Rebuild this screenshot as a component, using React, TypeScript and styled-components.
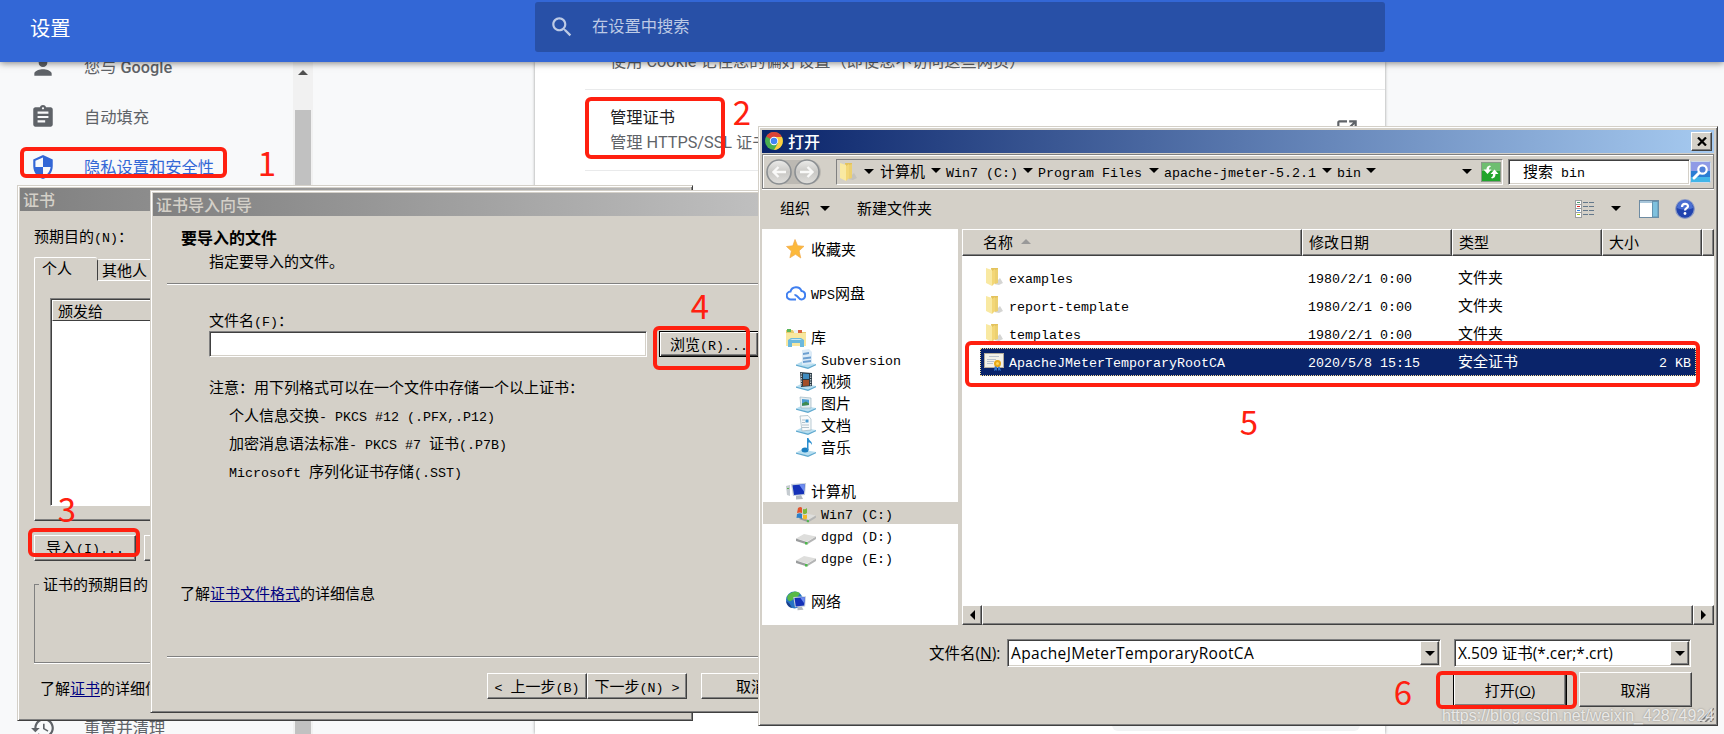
import styled, { createGlobalStyle } from "styled-components";

const FACE = "#d4d0c8";

const GlobalStyle = createGlobalStyle`
  * {
    box-sizing: border-box;
  }
  body {
    margin: 0;
    overflow: hidden;
  }
`;

const Screen = styled.div`
  position: relative;
  width: 1724px;
  height: 734px;
  overflow: hidden;
  display: flex;
  flex-direction: column;
  background: #f8f9fa;
  font-family: Roboto, "Noto Sans CJK SC", sans-serif;
  font-size: 16.25px;
`;

/* ---------- settings page ---------- */

const Header = styled.header`
  height: 62px;
  flex: none;
  display: flex;
  align-items: flex-start;
  background: #3367d6;
  color: white;
  box-shadow: 0 1px 7px rgba(0, 0, 0, 0.5);
  z-index: 1;
`;

const PageTitle = styled.h1`
  width: 535px;
  margin: 0;
  padding-left: 30px;
  font-size: 20.3px;
  font-weight: 400;
  line-height: 58px;
`;

const SearchBar = styled.div`
  width: 850px;
  height: 50px;
  margin-top: 2px;
  padding-left: 14px;
  display: flex;
  align-items: center;
  gap: 17px;
  border-radius: 3px;
  background: #2850a7;
  color: #bdcae5;
  line-height: 50px;
`;

const PageBody = styled.div`
  flex: 1;
  display: flex;
  overflow: hidden;
`;

const Menu = styled.nav`
  width: 293px;
  height: 672px;
  display: flex;
  flex-direction: column;
  margin-top: -20px;
`;

const MenuItem = styled.div<{ $active?: boolean; $last?: boolean }>`
  height: 50px;
  flex: none;
  display: flex;
  align-items: center;
  gap: 28px;
  margin-top: ${(p) => (p.$last ? "511px" : "0")};
  padding-left: 30px;
  color: ${(p) => (p.$active ? "#3367d6" : "#5f6368")};
  line-height: 24px;
  svg {
    flex: none;
  }
  span {
    padding-top: 1px;
  }
  b {
    font-weight: 500;
  }
`;

const PageScroll = styled.div`
  width: 20px;
  display: flex;
  flex-direction: column;
  align-items: center;
  gap: 35px;
  padding-top: 8px;
  background: #f1f1f1;
`;

const ScrollThumb = styled.div`
  width: 16px;
  flex: 1;
  background: #c1c1c1;
`;

const Card = styled.main`
  width: 850px;
  margin-left: 222px;
  padding-left: 50px;
  background: white;
  box-shadow: 0 0 3px rgba(0, 0, 0, 0.4);
`;

const Setting = styled.section<{ $height: number }>`
  height: ${(p) => p.$height}px;
  display: flex;
  justify-content: space-between;
  align-items: center;
  padding: 0 25px;
  border-bottom: 1px solid #e9eaeb;
  line-height: 25px;
  color: #5f6368;
  strong {
    display: block;
    font-weight: 400;
    color: #202124;
  }
`;

const Cut = styled.div`
  margin-top: -28px;
`;

const Chip = styled.div`
  position: absolute;
  left: 1112px;
  top: 700px;
  width: 248px;
  height: 31px;
  border-radius: 6px;
  background: #f1f3f4;
`;

/* ---------- classic windows ---------- */

const Window = styled.div<{
  $x: number;
  $y: number;
  $w: number;
  $h: number;
  $sizable?: boolean;
}>`
  position: absolute;
  z-index: 2;
  left: ${(p) => p.$x}px;
  top: ${(p) => p.$y}px;
  width: ${(p) => p.$w}px;
  height: ${(p) => p.$h}px;
  padding: ${(p) => (p.$sizable ? 2 : 1)}px;
  display: flex;
  flex-direction: column;
  overflow: hidden;
  background: ${FACE};
  border: 1px solid;
  border-color: ${FACE} #404040 #404040 ${FACE};
  box-shadow: inset 1px 1px white, inset -1px -1px #808080;
  color: black;
  font-family: "Noto Sans CJK SC", sans-serif;
  font-size: 15px;
  line-height: 20px;
  white-space: pre;
`;

const Caption = styled.div<{ $active?: boolean }>`
  height: 23px;
  flex: none;
  margin: 1px 1px 0;
  padding: 0 2px 2px 3px;
  display: flex;
  align-items: center;
  gap: 5px;
  background: ${(p) =>
    p.$active
      ? "linear-gradient(90deg, #0a246a, #a6caf0)"
      : "linear-gradient(90deg, #808080, #c0c0c0)"};
  color: ${(p) => (p.$active ? "white" : FACE)};
  font-size: 16px;
  font-weight: 500;
`;

const Latin = styled.span`
  font-family: "Liberation Mono", monospace;
  font-size: 13.34px;
  line-height: 1;
`;

// Chinese glyphs are 15px wide and Latin ones 8px
function Sim({ children }: { children: string }) {
  return (
    <span>
      {children
        .split(/([\x20-\x7e]+)/)
        .map((part, i) => (i % 2 ? <Latin key={i}>{part}</Latin> : part))}
    </span>
  );
}

const Bevel = styled.div<{ $w: number; $default?: boolean }>`
  width: ${(p) => p.$w}px;
  height: 26px;
  flex: none;
  display: flex;
  align-items: center;
  justify-content: center;
  background: ${FACE};
  border: 1px solid;
  border-color: ${(p) => (p.$default ? "black" : "white #404040 #404040 white")};
  box-shadow: ${(p) =>
    p.$default
      ? "inset 1px 1px white, inset -1px -1px #404040, inset -2px -2px #808080"
      : "inset -1px -1px #808080"};
`;

const Sunken = styled.div<{ $w: number; $h: number }>`
  width: ${(p) => p.$w}px;
  height: ${(p) => p.$h}px;
  flex: none;
  display: flex;
  align-items: center;
  background: white;
  border: 1px solid;
  border-color: #808080 white white #808080;
  box-shadow: inset 1px 1px #404040, inset -1px -1px ${FACE};
`;

const Link = styled.a`
  color: #000080;
  text-decoration: underline;
  text-underline-offset: 2px;
`;

const CertBody = styled.div`
  flex: 1;
  display: flex;
  flex-direction: column;
  padding: 15px 0 0 15px;
`;

const Tabs = styled.div`
  height: 24px;
  display: flex;
  align-items: flex-end;
  margin-top: 11px;
`;

const Tab = styled.div<{ $active?: boolean }>`
  width: ${(p) => (p.$active ? 63 : 70)}px;
  height: ${(p) => (p.$active ? 24 : 22)}px;
  padding-left: ${(p) => (p.$active ? 7 : 4)}px;
  border-top: 1px solid white;
  border-left: 1px solid ${(p) => (p.$active ? "white" : "#404040")};
  border-bottom: ${(p) => (p.$active ? "0" : "1px solid white")};
  border-radius: 2px 2px 0 0;
`;

const TabPane = styled.div`
  height: 240px;
  flex: none;
  padding: 17px 0 0 15px;
  border-left: 1px solid white;
  border-bottom: 1px solid #404040;
  box-shadow: inset 0 -1px #808080;
`;

const ListBox = styled.div`
  height: 208px;
  padding: 1px 0 0 1px;
  background: white;
  border: 1px solid;
  border-color: #808080 white white #808080;
  box-shadow: inset 1px 1px #404040;
`;

const ListHead = styled.div`
  height: 21px;
  padding-left: 5px;
  background: ${FACE};
  border-top: 1px solid white;
  border-left: 1px solid white;
  border-bottom: 1px solid #404040;
  line-height: 19px;
`;

const ButtonRow = styled.div`
  display: flex;
  gap: 8px;
  margin-top: 14px;
  ${Bevel} {
    padding-bottom: 2px;
  }
`;

const Group = styled.fieldset`
  height: 89px;
  margin: 13px 0 0;
  padding: 0 0 0 4px;
  border: 1px solid #808080;
  box-shadow: 0 1px white;
  legend {
    padding: 0 4px;
  }
`;

const CertHint = styled.div`
  margin: 15px 0 0 6px;
`;

const WizardHead = styled.div`
  height: 68px;
  flex: none;
  margin-left: 15px;
  padding: 10px 0 0 14px;
  border-bottom: 1px solid #808080;
  box-shadow: 0 1px white;
  line-height: 23px;
  strong {
    display: block;
    font-size: 16px;
    font-weight: 700;
  }
  p {
    margin: 0 0 0 28px;
  }
`;

const WizardBody = styled.div`
  height: 373px;
  flex: none;
  margin-left: 15px;
  padding: 26px 0 0 42px;
  border-bottom: 1px solid #808080;
  box-shadow: 0 1px white;
`;

const FileRow = styled.div`
  display: flex;
  gap: 12px;
  margin-top: 1px;
`;

const Notes = styled.ul`
  margin: 16px 0 0;
  padding: 0;
  list-style: none;
  line-height: 28px;
  li + li {
    padding-left: 20px;
  }
`;

const WizardHint = styled.div`
  margin: 98px 0 0 -29px;
`;

const WizardFoot = styled.div`
  display: flex;
  margin: 16px 0 0 335px;
  ${Bevel}:last-child {
    margin-left: 14px;
  }
`;

/* ---------- open dialog ---------- */

const CloseBox = styled(Bevel)`
  height: 19px;
  margin: 1px 0 0 auto;
`;

const AddressBand = styled.div`
  height: 35px;
  flex: none;
  display: flex;
  align-items: center;
  margin: 1px 1px 0;
  padding-left: 3px;
  border: 1px solid #808080;
  box-shadow: inset 1px 1px white, 0 1px white;
`;

const Breadcrumb = styled.div`
  width: 667px;
  height: 26px;
  display: flex;
  align-items: center;
  margin: 0 5px 0 14px;
  padding: 0 1px;
  border: 1px solid;
  border-color: #808080 white white #808080;
`;

const Crumb = styled.span<{ $w: number }>`
  width: ${(p) => p.$w}px;
  flex: none;
  display: flex;
  align-items: center;
  padding-bottom: 2px;
`;

const SearchField = styled(Sunken)`
  padding: 0 0 1px 14px;
`;

const Arrow = styled.i<{ $up?: boolean; $m?: string; $color?: string }>`
  width: 0;
  height: 0;
  flex: none;
  margin: ${(p) => p.$m ?? "0"};
  border: 5px solid transparent;
  ${(p) =>
    p.$up
      ? `border-bottom-color: ${p.$color ?? "#999"}; border-top: 0;`
      : "border-top-color: black; border-bottom: 0;"}
`;

const Toolbar = styled.div`
  height: 40px;
  flex: none;
  display: flex;
  align-items: center;
  padding: 0 0 2px 19px;
`;

const ToolIcons = styled.div`
  display: flex;
  align-items: center;
  margin: 1px 0 0 auto;
  padding-right: 20px;
`;

const Preview = styled.span`
  display: flex;
  margin-right: 16px;
`;

const Panes = styled.div`
  height: 396px;
  flex: none;
  display: flex;
  gap: 4px;
  margin: 0 1px;
`;

const Places = styled.div`
  width: 196px;
  padding-top: 9px;
  background: white;
`;

const Place = styled.div<{
  $level: number;
  $gap?: number;
  $selected?: boolean;
}>`
  height: 22px;
  display: flex;
  align-items: center;
  gap: 5px;
  margin: ${(p) => p.$gap ?? 0}px 0 0 1px;
  padding: 0 0 1px ${(p) => (p.$level ? 33 : 23)}px;
  background: ${(p) => (p.$selected ? FACE : "transparent")};
`;

const Files = styled.div`
  flex: 1;
  display: flex;
  flex-direction: column;
  background: white;
`;

const Columns = styled.div`
  height: 27px;
  display: flex;
  margin-bottom: 8px;
`;

const Column = styled.div<{ $w: number }>`
  width: ${(p) => p.$w}px;
  display: flex;
  align-items: center;
  gap: 8px;
  padding: 0 0 2px ${(p) => (p.$w > 300 ? 20 : 6)}px;
  background: ${FACE};
  border: 1px solid;
  border-color: white #404040 #404040 white;
  box-shadow: inset -1px -1px #808080;
`;

const FileLine = styled.div<{ $selected?: boolean }>`
  width: 716px;
  height: 28px;
  display: grid;
  grid-template-columns: 25px 299px 150px 150px 1fr;
  align-items: center;
  margin-left: 18px;
  padding: 0 5px 2px 4px;
  background: ${(p) => (p.$selected ? "#0a246a" : "white")};
  color: ${(p) => (p.$selected ? "white" : "black")};
  outline: ${(p) => (p.$selected ? "1px dotted #f5db95" : "0")};
  outline-offset: -1px;
  span:last-child {
    text-align: right;
  }
`;

const HScroll = styled.div`
  height: 20px;
  display: flex;
  margin-top: auto;
  ${Bevel} {
    height: 20px;
  }
`;

const SideArrow = styled.i<{ $right?: boolean }>`
  border: 5px solid transparent;
  ${(p) =>
    p.$right
      ? "border-left-color: black; border-right: 0;"
      : "border-right-color: black; border-left: 0;"}
`;

const NameRow = styled.div`
  display: flex;
  align-items: center;
  margin-top: 14px;
  padding-left: 168px;
  font-family: "Open Sans", "Noto Sans CJK SC", sans-serif;
  font-size: 15.5px;
`;

const Label = styled.label`
  width: 78px;
`;

const Combo = styled(Sunken)<{ $track?: number }>`
  justify-content: space-between;
  margin-right: 13px;
  padding: 0 1px 0 3px;
  letter-spacing: ${(p) => p.$track ?? 0}px;
  ${Bevel} {
    height: 24px;
  }
`;

const ActionRow = styled.div`
  display: flex;
  gap: 12px;
  margin: 5px 0 0 692px;
  font-family: "Open Sans", "Noto Sans CJK SC", sans-serif;
  font-size: 15px;
  ${Bevel} {
    height: 35px;
  }
`;

const Grip = styled.svg`
  position: absolute;
  right: 3px;
  bottom: 3px;
`;

/* ---------- annotations ---------- */

const Mark = styled.div<{ $x: number; $y: number; $w: number; $h: number }>`
  position: absolute;
  z-index: 3;
  left: ${(p) => p.$x}px;
  top: ${(p) => p.$y}px;
  width: ${(p) => p.$w}px;
  height: ${(p) => p.$h}px;
  border: 4px solid #ff2010;
  border-radius: 6px;
`;

const Digit = styled.div<{ $x: number; $y: number }>`
  position: absolute;
  z-index: 3;
  left: ${(p) => p.$x - 15}px;
  top: ${(p) => p.$y - 21}px;
  width: 30px;
  color: #ff2010;
  font: 400 33px/40px "Noto Sans CJK SC", sans-serif;
  text-align: center;
`;

const Watermark = styled.div`
  position: absolute;
  z-index: 3;
  left: 1442px;
  top: 706px;
  color: rgba(255, 255, 255, 0.75);
  text-shadow: 0 0 2px rgba(90, 90, 90, 0.6);
  font: 16px/20px "Liberation Sans", sans-serif;
`;

/* ---------- icons ---------- */

const PAGE_ICONS = {
  person:
    "M12 12c2.21 0 4-1.79 4-4s-1.79-4-4-4-4 1.79-4 4 1.79 4 4 4zm0 2c-2.67 0-8 1.34-8 4v2h16v-2c0-2.66-5.33-4-8-4z",
  autofill:
    "M19 3h-4.18C14.4 1.84 13.3 1 12 1s-2.4.84-2.82 2H5c-1.1 0-2 .9-2 2v14c0 1.1.9 2 2 2h14c1.1 0 2-.9 2-2V5c0-1.1-.9-2-2-2zm-7 0c.55 0 1 .45 1 1s-.45 1-1 1-1-.45-1-1 .45-1 1-1zm2 14H7v-2h7v2zm3-4H7v-2h10v2zm0-4H7V7h10v2z",
  shield:
    "M12 1L3 5v6c0 5.55 3.84 10.74 9 12 5.16-1.26 9-6.45 9-12V5l-9-4zm0 10.99h7c-.53 4.12-3.28 7.79-7 8.94V12H5V6.3l7-3.11v8.8z",
  restore:
    "M13 3c-4.97 0-9 4.03-9 9H1l3.89 3.89.07.14L9 12H6c0-3.87 3.13-7 7-7s7 3.13 7 7-3.13 7-7 7c-1.93 0-3.68-.79-4.94-2.06l-1.42 1.42C8.27 19.99 10.51 21 13 21c4.97 0 9-4.03 9-9s-4.03-9-9-9zm-1 5v5l4.28 2.54.72-1.21-3.5-2.08V8H12z",
  search:
    "M15.5 14h-.79l-.28-.27C15.41 12.59 16 11.11 16 9.5 16 5.91 13.09 3 9.5 3S3 5.91 3 9.5 5.91 16 9.5 16c1.61 0 3.09-.59 4.23-1.57l.27.28v.79l5 4.99L20.49 19l-4.99-5zm-6 0C7.01 14 5 11.99 5 9.5S7.01 5 9.5 5 14 7.01 14 9.5 11.99 14 9.5 14z",
  external:
    "M19 19H5V5h7V3H5c-1.11 0-2 .9-2 2v14c0 1.1.89 2 2 2h14c1.1 0 2-.9 2-2v-7h-2v7zM14 3v2h3.59l-9.83 9.83 1.41 1.41L19 6.41V10h2V3h-7z",
};

function PageIcon({
  name,
  size = 26,
}: {
  name: keyof typeof PAGE_ICONS;
  size?: number;
}) {
  return (
    <svg width={size} height={size} viewBox="0 0 24 24" fill="currentColor">
      <path d={PAGE_ICONS[name]} />
    </svg>
  );
}

function ChromeIcon() {
  return (
    <svg width="18" height="18" viewBox="0 0 18 18">
      <circle cx="9" cy="9" r="9" fill="#4caf50" />
      <path d="M9 9L1.2 4.5A9 9 0 0 1 16.8 4.5z" fill="#db4437" />
      <path d="M9 5h7.9A9 9 0 0 1 9 18l4-7z" fill="#ffcd40" />
      <circle cx="9" cy="9" r="4.2" fill="white" />
      <circle cx="9" cy="9" r="3.3" fill="#4285f4" />
    </svg>
  );
}

function NavButtons() {
  return (
    <svg width="56" height="28" viewBox="0 0 56 28">
      <defs>
        <linearGradient id="nav" x1="0" y1="0" x2="0" y2="1">
          <stop offset="0" stopColor="#ececea" />
          <stop offset="0.5" stopColor="#c9c8c5" />
          <stop offset="1" stopColor="#e0dfdc" />
        </linearGradient>
      </defs>
      <rect x="1" y="2" width="54" height="24" rx="12" fill="#bcb9b3" />
      {[13, 41].map((cx) => (
        <circle
          key={cx}
          cx={cx}
          cy="14"
          r="12"
          fill="url(#nav)"
          stroke="#8b8f92"
          strokeWidth="1.6"
        />
      ))}
      <g fill="none" stroke="#f9f9f8" strokeWidth="2.4">
        <path d="M20 14H8M12.500 9L7.500 14l5 5" />
        <path d="M34 14h12M41.500 9l5 5-5 5" />
      </g>
    </svg>
  );
}

function FolderIcon() {
  return (
    <svg width="20" height="20" viewBox="0 0 20 20">
      <path d="M10 17l6-6 3 5-4 2z" fill="#b9b9b5" opacity="0.6" />
      <path d="M7 1h7v13l-5 3z" fill="#e3c25c" />
      <path d="M2 1l6 2v16l-6-3z" fill="#f9e9a2" />
      <path d="M8 4l3-2v14l-3 3z" fill="#f3d777" />
      <path d="M11 3l3-1v14l-3 1z" fill="#ecd070" />
    </svg>
  );
}

function CertIcon() {
  return (
    <svg width="20" height="20" viewBox="0 0 20 20">
      <rect x="0.500" y="2.500" width="19" height="14" fill="#f3f1e9" stroke="#b5ad9d" />
      <path d="M5 5.500h10M3 8.500h9M3 10.500h7M3 12.500h6" stroke="#b9c2cb" />
      <path d="M11 14l-1 6 2-1 1 1v-5zM15 14l2 6-2-1-1 1v-5z" fill="#3176d1" />
      <circle cx="13.500" cy="12.500" r="3.500" fill="#e9a916" />
      <circle cx="13.500" cy="12.500" r="1.500" fill="#fbd65c" />
    </svg>
  );
}

function RefreshIcon() {
  return (
    <svg width="20" height="20" viewBox="0 0 20 20">
      <rect x="0.500" y="0.500" width="19" height="19" fill="#22a52c" stroke="#8a9a88" />
      <path d="M1 1h18v8H1z" fill="#6fbe70" />
      <path
        d="M9 3.500C6 4 5.500 6 5.500 7.500H2.500L6.500 12l4-4.500H8c0-2 .5-2.500 2-3z"
        fill="white"
      />
      <path
        d="M11 16.500c3-.5 3.500-2.500 3.500-4.500h3l-4-4.500-4 4.500H12c0 2-.5 3-2 3.500z"
        fill="white"
      />
    </svg>
  );
}

function FindIcon() {
  return (
    <svg width="21" height="22" viewBox="0 0 21 22">
      <rect x="0.500" y="0.500" width="20" height="21" rx="1" fill="#2a78d0" stroke="#cfd9e6" />
      <path d="M1 1h19v9H1z" fill="#8f9be6" />
      <path d="M1 10h19v11H1z" fill="#2b7dd4" />
      <path d="M1 16h19v5H1z" fill="#42b5e8" />
      <path d="M9.500 11.500L4 17" stroke="white" strokeWidth="3" strokeLinecap="round" />
      <circle cx="12.500" cy="8.500" r="4.200" fill="#5080d8" stroke="white" strokeWidth="2.200" />
    </svg>
  );
}

function ViewIcon() {
  return (
    <svg width="20" height="18" viewBox="0 0 20 18">
      <rect x="0.500" y="0.500" width="6" height="17" fill="white" stroke="#9a9d9f" />
      <path d="M1 4.500h5M1 8.500h5M1 12.500h5" stroke="#9a9d9f" />
      <path d="M2 2.500h3" stroke="#4c9a6a" />
      <path d="M2 6.500h3" stroke="#e02020" />
      <path d="M2 10.500h3" stroke="#2f84e0" />
      <path d="M2 14.500h3" stroke="#a5c81c" />
      <path
        d="M8 2.500h5M14 2.500h5M8 6.500h5M14 6.500h5M8 10.500h5M14 10.500h5M8 14.500h5M14 14.500h5"
        stroke="#64788b"
      />
    </svg>
  );
}

function PreviewIcon() {
  return (
    <svg width="20" height="18" viewBox="0 0 20 18">
      <rect x="0.500" y="0.500" width="19" height="17" fill="white" stroke="#6d8ba3" />
      <path d="M1 1h18v2H1z" fill="#a8c6da" />
      <rect x="13.500" y="1.500" width="5.500" height="15.500" fill="#7fc1de" stroke="#6594b0" />
    </svg>
  );
}

function HelpIcon() {
  return (
    <svg width="20" height="20" viewBox="0 0 20 20">
      <circle cx="10" cy="10" r="9.300" fill="#2143ae" stroke="#8d9cc6" strokeWidth="1.200" />
      <path d="M2 9a8 8 0 0 1 16 0c-5 2-11 2-16 0z" fill="#4a6fd2" />
      <path d="M7 8c0-4 6-4 6-.8 0 2-3 2-3 4.300" fill="none" stroke="white" strokeWidth="2.200" />
      <circle cx="10" cy="14.500" r="1.400" fill="white" />
    </svg>
  );
}

type PlaceKind =
  | "star"
  | "cloud"
  | "library"
  | "svn"
  | "video"
  | "picture"
  | "document"
  | "music"
  | "computer"
  | "system"
  | "drive"
  | "network";

const tray = (
  <>
    <path d="M0 15.500l6-3 14 2.500-8 4z" fill="#b7def0" />
    <path d="M0 15.500l12 3L20 15v1.200L12 20 0 16.700z" fill="#5fa9cf" />
  </>
);

const disk = (
  <>
    <path d="M0 12.500l8-4.500 12 2.500-9 5z" fill="#dededc" />
    <path d="M0 12.500l11 3.500v2.500L0 15z" fill="#9b9d9e" />
    <path d="M11 16l9-5.500V13l-9 5.500z" fill="#b4b5b5" />
    <path d="M9 16h2.500v2.500H9z" fill="#4bb84a" />
  </>
);

const monitor = (
  <>
    <path d="M10 15l5-1 2 4-7 .500z" fill="#b4bac0" />
    <path d="M5 3l15-1-1 12-12 1z" fill="#c3cddb" />
    <path d="M6.500 4.200L18.700 3.200l-.8 9.800-9.900 1z" fill="#1531b8" />
    <path d="M13 3.600l5.700-.4-.6 7.500z" fill="#6d8cf0" />
  </>
);

const drawings: Record<PlaceKind, React.ReactNode> = {
  star: (
    <path
      d="M9 .500l2.600 6.200 6.400.600-4.900 4.500 1.700 7.200-5.300-3.700-5.600 3.500 1.500-6.800L.500 7.500l6.300-.700z"
      fill="#fcb93b"
      stroke="#f0a94a"
      strokeWidth="0.700"
    />
  ),
  cloud: (
    <path
      d="M10 16.500H5a4 4 0 0 1-.5-8A5.800 5.800 0 0 1 15.500 8a4.300 4.300 0 0 1 0 8.500c-3.500 0-3.500-5-7-4.500"
      fill="none"
      stroke="#3f7ff0"
      strokeWidth="2"
    />
  ),
  library: (
    <>
      <path d="M0 3h7l1 2h12v13H0z" fill="#e6cb6c" />
      <path d="M1 2h4v3H1z" fill="#5cb85c" />
      <path d="M8 3h4v3H8z" fill="#e8f0f4" />
      <path d="M12 3h4v3h-4z" fill="#d9603f" />
      <path d="M0 6h20v13H0z" fill="#f8e79f" />
      <path d="M2 13l3-2h10l3 2v7h-4v-4H6v4H2z" fill="#6cb9dd" />
      <path d="M4 13l2-1h8l2 1z" fill="#c9e9f6" />
    </>
  ),
  svn: (
    <>
      {tray}
      <path d="M6 1l7-1 3 3v12l-10 1z" fill="#dcebf7" />
      <path d="M7 4l6-1v2l-6 1zM7 8.500l8-1v2l-8 1zM7 12l8-1v2l-8 1z" fill="#6d9fd0" />
    </>
  ),
  video: (
    <>
      {tray}
      <path d="M4 1l12 1v13L5 16z" fill="#2b3b45" />
      <path d="M7 2.500l6 .5v5H7z" fill="#3f8cc0" />
      <path d="M7 9h6v5.500L7 15z" fill="#a34e28" />
      <path d="M5.300 2v13M14.700 3v12" stroke="#d7e0e4" strokeDasharray="1.500 1" />
    </>
  ),
  picture: (
    <>
      {tray}
      <path d="M4 4l11 1v10L5 15z" fill="#e5eef2" stroke="#9db6c2" strokeWidth="0.700" />
      <path d="M6 6l7 .700V12l-7 .700z" fill="#4b9cd3" />
      <path d="M6 10.500l4-2 3 2V12l-7 .700z" fill="#3e8a52" />
    </>
  ),
  document: (
    <>
      {tray}
      <path d="M4 1l8-.500L15 4v11l-9 1z" fill="#f8fafb" stroke="#9db6c2" strokeWidth="0.700" />
      <path d="M6 5h3M6 7.500h3M6 10h7M6 12.500h7" stroke="#b3c2cc" />
      <path d="M9.500 4.500h3v3h-3z" fill="#4b9cd3" />
    </>
  ),
  music: (
    <>
      {tray}
      <ellipse cx="9" cy="13" rx="3.500" ry="2.500" fill="#1c7fc0" />
      <path d="M11 1h1.500c.500 3 4 3 3.500 7-1-2-2-2.500-3.500-2.500V13H11z" fill="#2b8fd0" />
    </>
  ),
  computer: (
    <>
      <path d="M0 5l4-1v11l-3-1z" fill="#c5cbd0" />
      <path d="M1 7.500h2" stroke="#5fb34f" />
      {monitor}
    </>
  ),
  system: (
    <>
      <g transform="translate(3.500 4) scale(.82)">{disk}</g>
      <path d="M2 5q3-2 4 0v5q-2-1-5 0z" fill="#e2532d" />
      <path d="M7 6q2 1 4-1v5q-2 2-4 .500z" fill="#7ab83c" />
      <path d="M1 11q3-1.500 5 0v5q-3-2-5.500-1z" fill="#2c7fc8" />
      <path d="M7 11.500q2 1 4 0v4q-2 1.500-4 .500z" fill="#f3b92a" />
    </>
  ),
  drive: <g transform="translate(0 1)">{disk}</g>,
  network: (
    <>
      <circle cx="8.500" cy="9" r="8.500" fill="#2673c4" />
      <path d="M2 4q6-6 12-2-2 5-6 5-2 4-5 3-3-2-1-6z" fill="#58b947" />
      <path d="M0 10q4 2 6 7-5-1-6-7z" fill="#1b3f8c" />
      <g transform="translate(3 3.500) scale(.85)">{monitor}</g>
    </>
  ),
};

function PlaceIcon({ kind }: { kind: PlaceKind }) {
  return (
    <svg width="20" height="20" viewBox="0 0 20 20">
      {drawings[kind]}
    </svg>
  );
}

/* ---------- data ---------- */

const crumbs = [
  { text: "计算机", width: 66 },
  { text: "Win7 (C:)", width: 92 },
  { text: "Program Files", width: 126 },
  { text: "apache-jmeter-5.2.1", width: 173 },
  { text: "bin", width: 44 },
];

const places: {
  kind: PlaceKind;
  text: string;
  level?: number;
  gap?: number;
}[] = [
  { kind: "star", text: "收藏夹" },
  { kind: "cloud", text: "WPS网盘", gap: 22 },
  { kind: "library", text: "库", gap: 22 },
  { kind: "svn", text: "Subversion", level: 1 },
  { kind: "video", text: "视频", level: 1 },
  { kind: "picture", text: "图片", level: 1 },
  { kind: "document", text: "文档", level: 1 },
  { kind: "music", text: "音乐", level: 1 },
  { kind: "computer", text: "计算机", gap: 22 },
  { kind: "system", text: "Win7 (C:)", level: 1 },
  { kind: "drive", text: "dgpd (D:)", level: 1 },
  { kind: "drive", text: "dgpe (E:)", level: 1 },
  { kind: "network", text: "网络", gap: 22 },
];

const files = [
  { name: "examples", date: "1980/2/1 0:00", type: "文件夹", size: "" },
  { name: "report-template", date: "1980/2/1 0:00", type: "文件夹", size: "" },
  { name: "templates", date: "1980/2/1 0:00", type: "文件夹", size: "" },
  {
    name: "ApacheJMeterTemporaryRootCA",
    date: "2020/5/8 15:15",
    type: "安全证书",
    size: "2 KB",
  },
];

const marks = [
  { x: 20, y: 147, w: 207, h: 31, dx: 267, dy: 163 },
  { x: 585, y: 97, w: 140, h: 62, dx: 742, dy: 112 },
  { x: 28, y: 528, w: 112, h: 29, dx: 67, dy: 509 },
  { x: 653, y: 326, w: 97, h: 44, dx: 700, dy: 306 },
  { x: 965, y: 341, w: 735, h: 46, dx: 1249, dy: 422 },
  { x: 1436, y: 671, w: 141, h: 38, dx: 1403, dy: 692 },
];

/* ---------- windows ---------- */

function SettingsPage() {
  return (
    <>
      <Header>
        <PageTitle>设置</PageTitle>
        <SearchBar>
          <PageIcon name="search" />
          在设置中搜索
        </SearchBar>
      </Header>
      <PageBody>
        <Menu>
          <MenuItem>
            <PageIcon name="person" />
            <span>
              您与 <b>Google</b>
            </span>
          </MenuItem>
          <MenuItem>
            <PageIcon name="autofill" />
            <span>自动填充</span>
          </MenuItem>
          <MenuItem $active>
            <PageIcon name="shield" />
            <span>隐私设置和安全性</span>
          </MenuItem>
          <MenuItem $last>
            <PageIcon name="restore" />
            <span>重置并清理</span>
          </MenuItem>
        </Menu>
        <PageScroll>
          <Arrow $up $color="#505050" />
          <ScrollThumb />
        </PageScroll>
        <Card>
          <Setting $height={28}>
            <Cut>使用 Cookie 记住您的偏好设置（即使您不访问这些网页）</Cut>
          </Setting>
          <Setting $height={81}>
            <div>
              <strong>管理证书</strong>
              管理 HTTPS/SSL 证书和设置
            </div>
            <PageIcon name="external" />
          </Setting>
        </Card>
      </PageBody>
      <Chip />
    </>
  );
}

function CertificateWindow() {
  return (
    <Window $x={17} $y={185} $w={676} $h={536}>
      <Caption>证书</Caption>
      <CertBody>
        <Sim>预期目的(N)：</Sim>
        <Tabs>
          <Tab $active>个人</Tab>
          <Tab>其他人</Tab>
        </Tabs>
        <TabPane>
          <ListBox>
            <ListHead>颁发给</ListHead>
          </ListBox>
        </TabPane>
        <ButtonRow>
          <Bevel $w={102}>
            <Sim>导入(I)...</Sim>
          </Bevel>
          <Bevel $w={102} />
        </ButtonRow>
        <Group>
          <legend>证书的预期目的</legend>
        </Group>
        <CertHint>
          了解<Link>证书</Link>的详细信息
        </CertHint>
      </CertBody>
    </Window>
  );
}

function ImportWizard() {
  return (
    <Window $x={150} $y={190} $w={620} $h={523}>
      <Caption>证书导入向导</Caption>
      <WizardHead>
        <strong>要导入的文件</strong>
        <p>指定要导入的文件。</p>
      </WizardHead>
      <WizardBody>
        <Sim>文件名(F)：</Sim>
        <FileRow>
          <Sunken $w={438} $h={26} />
          <Bevel $w={100} $default>
            <Sim>浏览(R)...</Sim>
          </Bevel>
        </FileRow>
        <Notes>
          <li>注意：用下列格式可以在一个文件中存储一个以上证书：</li>
          <li>
            <Sim>个人信息交换- PKCS #12 (.PFX,.P12)</Sim>
          </li>
          <li>
            <Sim>加密消息语法标准- PKCS #7 证书(.P7B)</Sim>
          </li>
          <li>
            <Sim>Microsoft 序列化证书存储(.SST)</Sim>
          </li>
        </Notes>
        <WizardHint>
          了解<Link>证书文件格式</Link>的详细信息
        </WizardHint>
      </WizardBody>
      <WizardFoot>
        <Bevel $w={100}>
          <Sim>{"< 上一步(B)"}</Sim>
        </Bevel>
        <Bevel $w={100}>
          <Sim>{"下一步(N) >"}</Sim>
        </Bevel>
        <Bevel $w={100}>取消</Bevel>
      </WizardFoot>
    </Window>
  );
}

function OpenDialog() {
  return (
    <Window $x={758} $y={126} $w={960} $h={600} $sizable>
      <Caption $active>
        <ChromeIcon />
        打开
        <CloseBox $w={21}>
          <svg width="10" height="9" viewBox="0 0 10 9">
            <path d="M1 .500l8 8M9 .500l-8 8" stroke="black" strokeWidth="2.200" />
          </svg>
        </CloseBox>
      </Caption>
      <AddressBand>
        <NavButtons />
        <Breadcrumb>
          <FolderIcon />
          <Arrow $m="0 6px 0 6px" />
          {crumbs.map((crumb) => (
            <Crumb key={crumb.text} $w={crumb.width}>
              <Sim>{crumb.text}</Sim>
              <Arrow $m="0 5px 0 auto" />
            </Crumb>
          ))}
          <Arrow $m="0 9px 0 auto" />
          <RefreshIcon />
        </Breadcrumb>
        <SearchField $w={182} $h={26}>
          <Sim>搜索 bin</Sim>
        </SearchField>
        <FindIcon />
      </AddressBand>
      <Toolbar>
        组织
        <Arrow $m="0 27px 0 10px" />
        新建文件夹
        <ToolIcons>
          <ViewIcon />
          <Arrow $m="0 18px 0 16px" />
          <Preview>
            <PreviewIcon />
          </Preview>
          <HelpIcon />
        </ToolIcons>
      </Toolbar>
      <Panes>
        <Places>
          {places.map((place) => (
            <Place
              key={place.text}
              $level={place.level ?? 0}
              $gap={place.gap}
              $selected={place.kind === "system"}
            >
              <PlaceIcon kind={place.kind} />
              <Sim>{place.text}</Sim>
            </Place>
          ))}
        </Places>
        <Files>
          <Columns>
            <Column $w={340}>
              名称
              <Arrow $up />
            </Column>
            <Column $w={150}>修改日期</Column>
            <Column $w={150}>类型</Column>
            <Column $w={100}>大小</Column>
            <Column $w={12} />
          </Columns>
          {files.map((file) => (
            <FileLine key={file.name} $selected={file.size !== ""}>
              {file.size ? <CertIcon /> : <FolderIcon />}
              <Sim>{file.name}</Sim>
              <Sim>{file.date}</Sim>
              <Sim>{file.type}</Sim>
              <Sim>{file.size}</Sim>
            </FileLine>
          ))}
          <HScroll>
            <Bevel $w={20}>
              <SideArrow />
            </Bevel>
            <Bevel $w={711} />
            <Bevel $w={21}>
              <SideArrow $right />
            </Bevel>
          </HScroll>
        </Files>
      </Panes>
      <NameRow>
        <Label>
          文件名(<u>N</u>):
        </Label>
        <Combo $w={434} $h={28} $track={0.35}>
          ApacheJMeterTemporaryRootCA
          <Bevel $w={19}>
            <Arrow />
          </Bevel>
        </Combo>
        <Combo $w={237} $h={28}>
          X.509 证书(*.cer;*.crt)
          <Bevel $w={19}>
            <Arrow />
          </Bevel>
        </Combo>
      </NameRow>
      <ActionRow>
        <Bevel $w={114} $default>
          <span>
            打开(<u>O</u>)
          </span>
        </Bevel>
        <Bevel $w={113}>取消</Bevel>
      </ActionRow>
      <Grip width="14" height="14" viewBox="0 0 14 14">
        <path d="M0 14L14 0M5 14l9-9M10 14l4-4" stroke="#808080" strokeWidth="2" />
        <path d="M-1.500 14L14-1.500M3.500 14L14 3.500M8.500 14L14 8.500" stroke="white" />
      </Grip>
    </Window>
  );
}

export default function App() {
  return (
    <Screen>
      <GlobalStyle />
      <SettingsPage />
      <CertificateWindow />
      <ImportWizard />
      <OpenDialog />
      {marks.map((mark, i) => (
        <div key={i}>
          <Mark $x={mark.x} $y={mark.y} $w={mark.w} $h={mark.h} />
          <Digit $x={mark.dx} $y={mark.dy}>
            {i + 1}
          </Digit>
        </div>
      ))}
      <Watermark>https://blog.csdn.net/weixin_42874924</Watermark>
    </Screen>
  );
}
